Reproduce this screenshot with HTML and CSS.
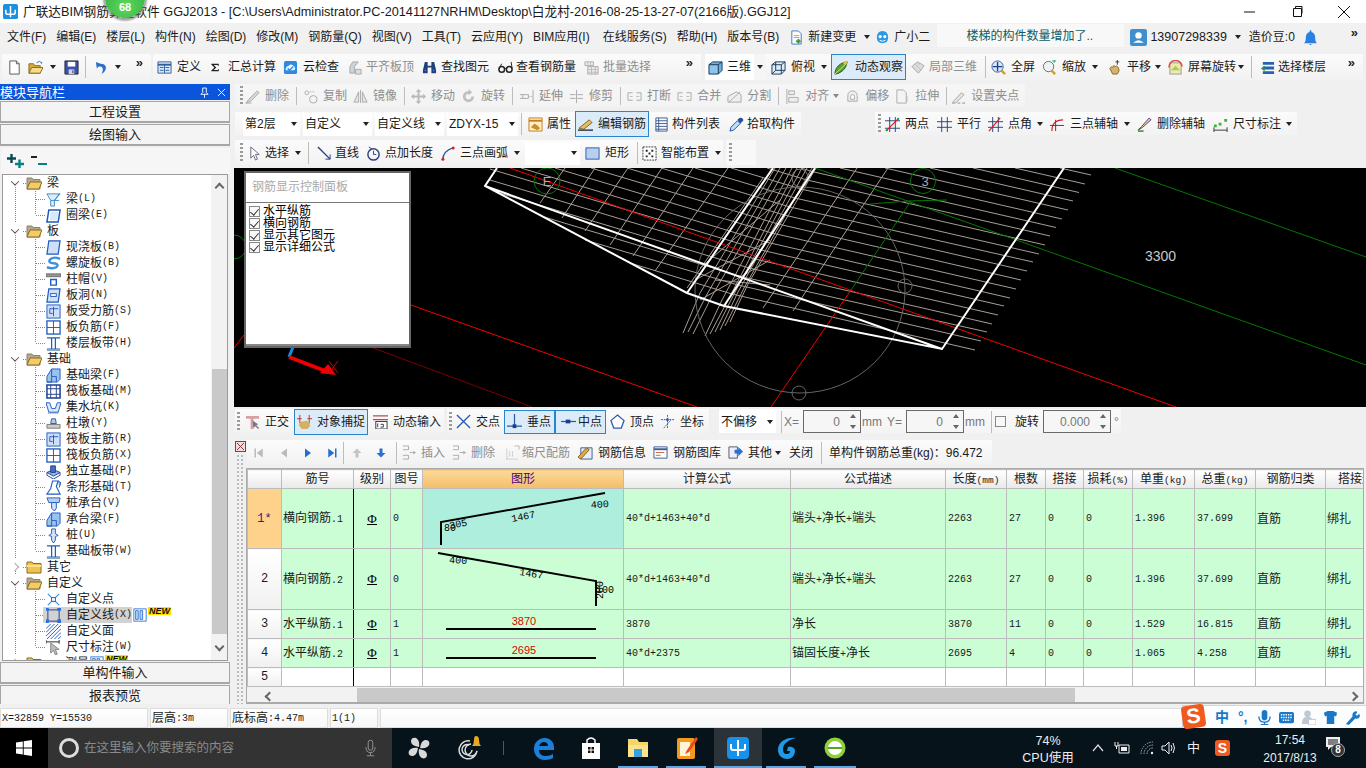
FILE: index.html
```html
<!DOCTYPE html>
<html lang="zh-CN">
<head>
<meta charset="utf-8">
<title>广联达BIM钢筋算量软件 GGJ2013</title>
<link rel="stylesheet" href="styles.css">
</head>
<body>
<svg class="sprite" xmlns="http://www.w3.org/2000/svg">
<defs>
<symbol id="new" viewBox="0 0 16 16"><path d="M3 1h7l3 3v11H3z" fill="#fff" stroke="#555"/><path d="M10 1v3h3" fill="#ddd" stroke="#555"/></symbol>
<symbol id="open" viewBox="0 0 16 16"><path d="M1 4h5l1 2h6v8H1z" fill="#d9ab3e" stroke="#8a6a20"/><path d="M4 8h12l-3 6H1z" fill="#f6dc84" stroke="#8a6a20"/><path d="M9 3q3-3 6 0l-1 1" fill="none" stroke="#3a6ec0"/></symbol>
<symbol id="save" viewBox="0 0 16 16"><path d="M1 1h14v14H1z" fill="#3a55a8" stroke="#223"/><path d="M4 2h8v5H4z" fill="#fff"/><path d="M5 10h6v5H5z" fill="#cfd6e6"/><path d="M9 11h1v3H9z" fill="#334"/></symbol>
<symbol id="undo" viewBox="0 0 16 16"><path d="M2 2l1 7 2-2c4-1 6 2 3 8 6-3 7-11-1-11z" fill="#2a6fc9"/></symbol>
<symbol id="define" viewBox="0 0 16 16"><path d="M1 2h14v12H1z" fill="#dbe8f6" stroke="#2e5f9e"/><path d="M1 5h14" stroke="#2e5f9e" stroke-width="2"/><path d="M3 8h4M3 11h4M9 8h4M9 11h4M8 5v9" stroke="#2e5f9e"/></symbol>
<symbol id="cloud" viewBox="0 0 16 16"><rect x="1" y="1" width="14" height="14" rx="2" fill="#2f8ade"/><path d="M3 11q-1-4 3-5 3-3 6 1 2 2 0 4z" fill="#e9f4fd"/><path d="M5 9l2 2 4-4" fill="none" stroke="#2f8ade" stroke-width="1.5"/></symbol>
<symbol id="level" viewBox="0 0 16 16"><path d="M2 14V7l3-5h6L7 7v7z" fill="#cfd2d2" stroke="#aaa"/><path d="M8 10h6v5H8z" fill="#ddd" stroke="#aaa"/></symbol>
<symbol id="binoc" viewBox="0 0 16 16"><path d="M3 2h3v4h4V2h3l2 9v3h-5V8H6v6H1v-3z" fill="#1f3f7f"/><path d="M3 11h1M12 11h1" stroke="#9bd" /></symbol>
<symbol id="glass" viewBox="0 0 16 16"><circle cx="4" cy="10" r="3" fill="none" stroke="#222" stroke-width="1.6"/><circle cx="12" cy="10" r="3" fill="none" stroke="#222" stroke-width="1.6"/><path d="M7 9h2M1 9l3-5M15 9l-1-7" stroke="#222" fill="none"/></symbol>
<symbol id="batch" viewBox="0 0 16 16"><path d="M1 2h9v4H1zM4 7h11v8H4z" fill="#eee" stroke="#aaa"/><path d="M4 10h11M4 13h11M8 7v8M12 7v8M4 2v4M7 2v4" stroke="#bbb"/></symbol>
<symbol id="cube" viewBox="0 0 16 16"><path d="M1 5l4-3h10v9l-4 4H1z" fill="#6db0e0" stroke="#1e3a55"/><path d="M1 5h10v10M11 5l4-3" stroke="#1e3a55" fill="none"/><path d="M2 6h8v8H2z" fill="#8cc6ee"/></symbol>
<symbol id="cubet" viewBox="0 0 16 16"><path d="M1 5l4-3h10v9l-4 4H1z" fill="#dcecf8" stroke="#1e3a55"/><path d="M1 5h10v10M11 5l4-3M5 2v9h10M5 11l-4 4" stroke="#1e3a55" fill="none"/></symbol>
<symbol id="orbit" viewBox="0 0 16 16"><path d="M1 15c0-7 5-12 13-13-1 7-5 11-12 13z" fill="#58a030" stroke="#2d5a15"/><path d="M1 15L13 4" stroke="#d8e8b0"/><circle cx="12" cy="3" r="2" fill="#e8c33a"/></symbol>
<symbol id="local3" viewBox="0 0 16 16"><path d="M2 7l6-5 7 4-6 8z" fill="#ddd" stroke="#aaa"/><path d="M2 7l7 7M8 2l2 3M5 4l7 7" stroke="#bbb"/></symbol>
<symbol id="full" viewBox="0 0 16 16"><circle cx="7" cy="7" r="6" fill="#d8e6f8" stroke="#3a5fa8"/><path d="M7 2v10M2 7h10" stroke="#1e3f88" stroke-width="1.4"/><path d="M11 11l4 4" stroke="#c9a030" stroke-width="2.5"/></symbol>
<symbol id="zoom" viewBox="0 0 16 16"><circle cx="7" cy="7" r="5.5" fill="#eef3f8" stroke="#666"/><path d="M10 11l4 4" stroke="#c9a030" stroke-width="2.5"/><path d="M11 1h4M13 0v3" stroke="#2a6" /></symbol>
<symbol id="pan" viewBox="0 0 16 16"><path d="M3 9l2-2 1 1 1-2 2 1 1-1 2 2 1 3-2 4H6z" fill="#d8b070" stroke="#8a6a20"/><path d="M11 0v5M9 2h4" stroke="#335" /></symbol>
<symbol id="rot" viewBox="0 0 16 16"><rect x="2" y="3" width="12" height="12" fill="#f2e8a8" stroke="#999"/><path d="M3 11l5-5 5 5" fill="#9ccf6a"/><path d="M1 8a7 7 0 0 1 14-1" fill="none" stroke="#e05040" stroke-width="1.6"/></symbol>
<symbol id="floor" viewBox="0 0 16 16"><path d="M3 2h12v3H3zM3 7h12v3H3zM3 12h12v3H3z" fill="#2a60b0"/><path d="M1 9l4-3v6z" fill="#1a9a40"/></symbol>
<symbol id="nfile" viewBox="0 0 16 16"><path d="M3 1h7l3 3v11H3z" fill="#fff" stroke="#3a78c8"/><path d="M5 6h6M5 8h6" stroke="#8ab"/><path d="M10 9l3 3-3 3-3-3z" fill="#4aa040"/></symbol>
<symbol id="gxe" viewBox="0 0 16 16"><path d="M2 8q0-7 6-7t6 7q0 6-6 6t-6-6z" fill="#2a9ae6"/><circle cx="5.5" cy="7" r="1.7" fill="#fff"/><circle cx="10.5" cy="7" r="1.7" fill="#fff"/><path d="M5 11q3 2 6 0" stroke="#fff" fill="none"/></symbol>
<symbol id="user" viewBox="0 0 16 16"><rect width="16" height="16" rx="2" fill="#3f8fd0"/><circle cx="8" cy="6" r="3" fill="#fff"/><path d="M3 13q5-5 10 0z" fill="#fff"/></symbol>
<symbol id="bell" viewBox="0 0 16 16"><path d="M8 0q1 0 1 2 4 1 4 6t2 6H1q2-1 2-6t4-6q0-2 1-2z" fill="#2a7fe0"/><path d="M6 15h4l-2 1z" fill="#2a7fe0"/></symbol>
<symbol id="del" viewBox="0 0 16 16"><path d="M1 15l3-4 9-9 2 2-9 9z" fill="#d8d8d8" stroke="#aaa"/><path d="M1 15h6" stroke="#aaa"/></symbol>
<symbol id="copy" viewBox="0 0 16 16"><circle cx="4" cy="4" r="2" fill="none" stroke="#aaa"/><circle cx="11" cy="11" r="4" fill="none" stroke="#aaa"/><path d="M7 3l6 0" stroke="#bbb" stroke-dasharray="2 1"/></symbol>
<symbol id="mirror" viewBox="0 0 16 16"><path d="M1 14L6 3v11zM15 14L10 3v11z" fill="#e6e6e6" stroke="#aaa"/><path d="M8 1v14" stroke="#aaa"/></symbol>
<symbol id="move" viewBox="0 0 16 16"><path d="M8 0l3 3H9v4h4V5l3 3-3 3V9H9v4h2l-3 3-3-3h2V9H3v2L0 8l3-3v2h4V3H5z" fill="#b8b8b8"/></symbol>
<symbol id="rota" viewBox="0 0 16 16"><path d="M8 2a6 6 0 1 0 6 6h-3a3 3 0 1 1-3-3v2l4-3.500-4-3.500z" fill="#c0c0c0"/></symbol>
<symbol id="ext" viewBox="0 0 16 16"><path d="M15 1v14M1 6h9v4H1M4 6v4" fill="none" stroke="#aaa"/><path d="M11 8h3" stroke="#aaa" stroke-dasharray="1 1"/></symbol>
<symbol id="trim" viewBox="0 0 16 16"><path d="M8 1v14M1 6h6M1 10h6M9 6h6M9 10h6" fill="none" stroke="#aaa"/></symbol>
<symbol id="brk" viewBox="0 0 16 16"><path d="M1 4h5M10 4h5M1 12h5M10 12h5M1 4v8M15 4v8" stroke="#aaa" fill="none"/><path d="M3 8h3M10 8h3" stroke="#bbb"/></symbol>
<symbol id="split" viewBox="0 0 16 16"><path d="M1 14V8l9-5 5 3v8z" fill="#eee" stroke="#aaa"/><path d="M2 14L14 3" stroke="#aaa"/></symbol>
<symbol id="align" viewBox="0 0 16 16"><path d="M2 0v16" stroke="#aaa"/><path d="M4 2h6v4H4zM4 9h10v5H4z" fill="#eee" stroke="#aaa"/></symbol>
<symbol id="offs" viewBox="0 0 16 16"><path d="M3 13V7a5 5 0 0 1 10 0v6z" fill="#eee" stroke="#aaa"/><path d="M6 11V8a2 2 0 0 1 4 0v3z" fill="#fff" stroke="#aaa"/></symbol>
<symbol id="stretch" viewBox="0 0 16 16"><path d="M2 1h7l3 3v11H2z" fill="#f4f4f4" stroke="#aaa"/><path d="M13 8v6" stroke="#aaa" stroke-dasharray="1 1"/></symbol>
<symbol id="grip3" viewBox="0 0 16 16"><path d="M2 14l9-10 3 2-9 9z" fill="#e4e4e4" stroke="#aaa"/><path d="M1 14h3v2H1zM7 14h3v2H7zM12 14h3v2h-3z" fill="#bbb"/></symbol>
<symbol id="prop" viewBox="0 0 16 16"><path d="M1 1h14v14H1z" fill="#fbf0c8" stroke="#c87a20"/><path d="M1 4h14" stroke="#c87a20" stroke-width="2"/><path d="M3 11l4-4 3 2 3 3-3 2z" fill="#c89020"/></symbol>
<symbol id="edit" viewBox="0 0 16 16"><path d="M1 12L12 3l3 3-9 7z" fill="#e6c060" stroke="#806020"/><path d="M0 14h16" stroke="#223" stroke-width="1.4"/></symbol>
<symbol id="list" viewBox="0 0 16 16"><path d="M2 1h12v14H2z" fill="#fff" stroke="#3a5a90"/><path d="M5 1v14M2 4h12M2 7h12M2 10h12M2 13h12" stroke="#3a5a90"/></symbol>
<symbol id="pick" viewBox="0 0 16 16"><path d="M1 15l1-4 7-7 3 3-7 7z" fill="#bfe0f4" stroke="#2050a0"/><path d="M9 3l2-2q2-1 4 1 1 2-1 3l-2 2z" fill="#2a50a0"/></symbol>
<symbol id="two" viewBox="0 0 16 16"><path d="M5 0v16M11 0v16M0 4h16M0 12h16" stroke="#2a3f80"/><path d="M1 15L14 2" stroke="#d82020" stroke-width="1.3"/><circle cx="14" cy="2" r="1.2" fill="#19a050"/><circle cx="2" cy="14" r="1.2" fill="#19a050"/></symbol>
<symbol id="para" viewBox="0 0 16 16"><path d="M5 0v16M11 0v16M0 5h16M0 11h16" stroke="#2a3f80"/></symbol>
<symbol id="angle" viewBox="0 0 16 16"><path d="M5 0v16M11 0v16M0 5h16M0 11h16" stroke="#2a3f80"/><path d="M1 15L13 1" stroke="#d82020" stroke-width="1.3"/></symbol>
<symbol id="arc3" viewBox="0 0 16 16"><path d="M2 15q0-12 12-12" fill="none" stroke="#d82020" stroke-width="1.3"/><path d="M6 3v12M0 9h15" stroke="#2a3f80"/></symbol>
<symbol id="delaxis" viewBox="0 0 16 16"><path d="M1 14l4-4 8-9 2 2-9 8z" fill="#e8c8a0" stroke="#504080"/><path d="M1 15h6" stroke="#5a3" stroke-width="2"/></symbol>
<symbol id="dim" viewBox="0 0 16 16"><path d="M1 11v5M15 11v5M1 14h14" stroke="#333"/><path d="M12 2h3v3h-3zM6 6h3v3H6zM1 8h3v3H1z" fill="#40b040"/></symbol>
<symbol id="select" viewBox="0 0 16 16"><path d="M3 1v12l3-3 2 5 2-1-2-5h4z" fill="#fff" stroke="#667"/></symbol>
<symbol id="line" viewBox="0 0 16 16"><path d="M1 1l13 13" stroke="#2a3f80" stroke-width="1.5"/><path d="M14 14V9M14 14H9" stroke="#2a3f80"/></symbol>
<symbol id="ptlen" viewBox="0 0 16 16"><circle cx="8" cy="9" r="6" fill="none" stroke="#2a3f80" stroke-width="1.5"/><path d="M8 5v4h3M3 1l3 2-3 2" fill="none" stroke="#2a3f80"/></symbol>
<symbol id="arcp" viewBox="0 0 16 16"><path d="M2 15q0-10 11-13" fill="none" stroke="#2a5ab0" stroke-width="1.6"/><circle cx="13" cy="2" r="1.6" fill="#d82020"/><circle cx="2" cy="14" r="1.6" fill="#d82020"/></symbol>
<symbol id="rect" viewBox="0 0 16 16"><rect x="1" y="2" width="14" height="12" fill="#b8d0ee" stroke="#2a5ab0"/></symbol>
<symbol id="smart" viewBox="0 0 16 16"><path d="M1 1h14v14H1z" fill="#fff" stroke="#333" stroke-dasharray="2 1"/><path d="M4 4h2v2H4zM10 4h2v2h-2zM7 7h2v2H7zM4 10h2v2H4zM10 10h2v2h-2z" fill="#222"/></symbol>
<symbol id="ortho" viewBox="0 0 16 16"><path d="M1 2h14v3H9v11H6V5H1z" fill="#d8a0a0"/><path d="M8 7l1 8 2-2 3 3 1-1-3-3 2-1z" fill="#778"/></symbol>
<symbol id="snap" viewBox="0 0 16 16"><path d="M3 1v9M13 1v9M0 5h5M11 5h5" stroke="#c03020"/><path d="M2 12q1-5 5-4l3-1 3 2 1 4-3 3H5z" fill="#d4b060"/></symbol>
<symbol id="dyn" viewBox="0 0 16 16"><path d="M0 2h16M0 6h16" stroke="#b05050" stroke-width="1.4"/><rect x="3" y="8" width="12" height="8" fill="#fff" stroke="#334"/><path d="M5 10v4M8 11h3v3H8" stroke="#334" fill="none"/></symbol>
<symbol id="cross" viewBox="0 0 16 16"><path d="M1 1l14 14M15 1L1 15" stroke="#2a5ab0" stroke-width="1.4"/></symbol>
<symbol id="perp" viewBox="0 0 16 16"><path d="M8 0v15M0 13h16" stroke="#2a5ab0" stroke-width="1.3"/><rect x="6" y="11" width="4" height="4" fill="#1a3f90"/></symbol>
<symbol id="mid" viewBox="0 0 16 16"><path d="M0 8h16" stroke="#2a5ab0" stroke-width="1.3"/><rect x="5" y="6" width="5" height="4" fill="#1a3f90"/></symbol>
<symbol id="vert" viewBox="0 0 16 16"><path d="M8 1l7 6-3 8H4L1 7z" fill="#fff" stroke="#2a5ab0" stroke-width="1.3"/></symbol>
<symbol id="coord" viewBox="0 0 16 16"><path d="M1 6h14M8 1v14M4 15l8-9" stroke="#2a5ab0" stroke-dasharray="2 1" fill="none"/><circle cx="8" cy="6" r="1.5" fill="#2a5ab0"/></symbol>
<symbol id="first" viewBox="0 0 16 16"><path d="M2 2h2v12H2zM13 2v12L5 8z" fill="#bbb"/></symbol>
<symbol id="prev" viewBox="0 0 16 16"><path d="M12 2v12L4 8z" fill="#bbb"/></symbol>
<symbol id="next" viewBox="0 0 16 16"><path d="M4 2v12l8-6z" fill="#2070d0"/></symbol>
<symbol id="last" viewBox="0 0 16 16"><path d="M3 2v12l8-6zM12 2h2v12h-2z" fill="#2070d0"/></symbol>
<symbol id="up" viewBox="0 0 16 16"><path d="M8 2l6 6h-4v6H6V8H2z" fill="#c4c4c4"/></symbol>
<symbol id="down" viewBox="0 0 16 16"><path d="M8 14l6-6h-4V2H6v6H2z" fill="#2a70d0"/></symbol>
<symbol id="ins" viewBox="0 0 16 16"><path d="M1 1h6v4H1M1 11h6v4H1" fill="none" stroke="#aaa"/><path d="M8 8h4" stroke="#aaa"/><path d="M12 6l3 2-3 2z" fill="#aaa"/></symbol>
<symbol id="scale" viewBox="0 0 16 16"><path d="M2 15V3M2 15h12M5 12V6M8 12V6" stroke="#aaa" stroke-dasharray="1 1"/><path d="M10 1h5v4" stroke="#bbb" fill="none"/></symbol>
<symbol id="info" viewBox="0 0 16 16"><path d="M3 3h12v12H3z" fill="#e8eef8" stroke="#3a5a90"/><path d="M0 13L9 3l3 2-9 10z" fill="#e8a840" stroke="#806020"/></symbol>
<symbol id="lib" viewBox="0 0 16 16"><path d="M1 2h14v12H1z" fill="#fff" stroke="#3a5a90"/><path d="M1 4.500h14" stroke="#3a5a90" stroke-width="2"/><path d="M3 8h9M3 11h5" stroke="#c86040"/></symbol>
<symbol id="other" viewBox="0 0 16 16"><path d="M1 2h9v12H1z" fill="#eef" stroke="#556"/><path d="M7 5h4V2l5 5-5 5V9H7z" fill="#2a70d0"/></symbol>
<symbol id="sum" viewBox="0 0 16 16"><path d="M2 2h12v4l-2-2H6l4 4-4 4h6l2-2v4H2v-1l5-5-5-5z" fill="#222"/></symbol>
<symbol id="folderO" viewBox="0 0 16 14"><path d="M1 2h5l1 1.500h7V13H1z" fill="#b4a78a" stroke="#8d836b"/><path d="M1 13l3-7h12l-3 7z" fill="#f2cc68" stroke="#8d6a22"/></symbol>
<symbol id="folderC" viewBox="0 0 16 14"><path d="M1 2h5l1 1.500h8V13H1z" fill="#f0c24e" stroke="#8d6a22"/><path d="M1 5h14v2H1z" fill="#f8e190"/></symbol>
<symbol id="beam" viewBox="0 0 16 16"><path d="M1 2h14L9 9v6H5V9z" fill="#d8eefc" stroke="#3f8ac8"/><path d="M5 9h9M9 9l5-7" stroke="#3f8ac8"/></symbol>
<symbol id="ring" viewBox="0 0 16 16"><path d="M3 2h12l-2 13H1z" fill="#fff" stroke="#1f5ac0" stroke-width="1.6"/><path d="M5 4h8l-1 9H4z" fill="#d8e8f8"/></symbol>
<symbol id="slab" viewBox="0 0 16 16"><path d="M3 1h12l-2 14H1z" fill="#cfe0f6" stroke="#1f5ac0" stroke-width="1.3"/></symbol>
<symbol id="spiral" viewBox="0 0 16 16"><path d="M15 3Q7 0 4 4q-2 4 6 4 4 1 1 4-4 2-10 0" fill="none" stroke="#3c90dc" stroke-width="2.600"/></symbol>
<symbol id="cap" viewBox="0 0 16 16"><path d="M0 2h16v3H0z" fill="#999" stroke="#666"/><path d="M5 8h6v6H5z" fill="#fff" stroke="#2060c0" stroke-width="1.5"/></symbol>
<symbol id="hole" viewBox="0 0 16 16"><path d="M3 1h12l-2 14H1z" fill="#cfe0f6" stroke="#1f5ac0" stroke-width="1.3"/><rect x="5" y="6" width="6" height="3" fill="#fff" stroke="#1f5ac0"/></symbol>
<symbol id="rebarA" viewBox="0 0 16 16"><rect x="1" y="1" width="14" height="14" fill="#cfe0f6" stroke="#1f5ac0"/><path d="M8 3v10M4 5h9M4 5v5h3" stroke="#1f5ac0" fill="none"/></symbol>
<symbol id="rebarB" viewBox="0 0 16 16"><rect x="1" y="1" width="14" height="14" fill="#fff" stroke="#1f5ac0" stroke-width="1.4"/><path d="M8 1v14M1 8h14" stroke="#1f5ac0"/></symbol>
<symbol id="band" viewBox="0 0 16 16"><path d="M1 2h14M1 14h14M6 2v12M10 2v12" stroke="#1f5ac0" stroke-width="1.3"/><path d="M1 15h14" stroke="#8ab" stroke-width="2"/></symbol>
<symbol id="found" viewBox="0 0 16 16"><path d="M6 1h9v11l-3 3H1V9z" fill="#9bc4ec" stroke="#1f5ac0"/><path d="M6 1v8M1 15h5V9h5v6" stroke="#1f5ac0" fill="none"/></symbol>
<symbol id="raft" viewBox="0 0 16 16"><path d="M1 1h14v14H1z" fill="#fff" stroke="#1f3f90" stroke-width="1.6"/><path d="M5 5h6v6H5zM1 5h4M11 5h4M1 11h4M11 11h4M5 1v4M11 1v4M5 11v4M11 11v4" fill="#fff" stroke="#1f3f90"/></symbol>
<symbol id="sump" viewBox="0 0 16 16"><path d="M0 3h4l2 6h4l2-6h4l-3 10H3z" fill="#d8e8fa" stroke="#1f5ac0"/><path d="M2 14h12" stroke="#1f5ac0" stroke-dasharray="1 1"/></symbol>
<symbol id="pier" viewBox="0 0 16 16"><path d="M6 3h4l1 5H5z" fill="#bcd" stroke="#1f5ac0"/><path d="M1 9h14v4H1z" fill="#ccc" stroke="#777"/></symbol>
<symbol id="iso" viewBox="0 0 16 16"><path d="M1 9l7-3 7 3-7 4z" fill="#8fb8e8" stroke="#1f3f90"/><path d="M5 2h5v7H5z" fill="#4a70b8" stroke="#1f3f90"/><path d="M1 9v3l7 4 7-4V9" fill="none" stroke="#1f3f90"/></symbol>
<symbol id="strip" viewBox="0 0 16 16"><path d="M7 1h6l-2 6 4 8H1l4-6z" fill="#fff" stroke="#1f5ac0" stroke-width="1.2"/><path d="M13 1l3 2-2 5" fill="#7ba8dc" stroke="#1f5ac0"/></symbol>
<symbol id="pilecap" viewBox="0 0 16 16"><path d="M1 2h14l-1 5H3z" fill="#b8d0ee" stroke="#1f5ac0"/><path d="M6 7h5v6l-2 3-3-3z" fill="#d8e4f4" stroke="#1f5ac0"/></symbol>
<symbol id="pile" viewBox="0 0 16 16"><path d="M6 1h4v5l3 2-3 1v4l-2 3-2-3V9L3 8l3-2z" fill="#d8e4f4" stroke="#1f5ac0"/></symbol>
<symbol id="xpt" viewBox="0 0 16 16"><path d="M2 2l12 12M14 2L2 14" stroke="#3c90dc" stroke-width="1.3"/><rect x="6" y="6" width="4" height="4" fill="#fff" stroke="#1f5ac0"/></symbol>
<symbol id="xln" viewBox="0 0 16 16"><rect x="2" y="2" width="12" height="12" fill="none" stroke="#1f3f90"/><path d="M0 0h3v3H0zM12 0h4v3h-4zM0 12h3v4H0zM12 12h4v4h-4z" fill="#2a70e0"/></symbol>
<symbol id="xfc" viewBox="0 0 16 16"><path d="M0 5l5-5M0 9l9-9M0 13l13-13M1 16L16 1M5 16L16 5M9 16l7-7M13 16l3-3" stroke="#1f5ac0"/></symbol>
<symbol id="dimc" viewBox="0 0 16 16"><path d="M0 2h14M0 0v4M14 0v4" stroke="#222"/><path d="M5 3v11l3-3 2 5 2-1-2-5h4z" fill="#bbb" stroke="#888"/></symbol>
<symbol id="gridn" viewBox="0 0 16 16"><rect x="1" y="1" width="14" height="14" fill="#fff" stroke="#2a70d0"/><path d="M3 3h3v10H3zM8 3h3v10H8z" fill="#bcd8f6" stroke="#2a70d0"/></symbol>
<symbol id="plusP" viewBox="0 0 18 14"><path d="M0 4.500h9M4.500 0v9" stroke="#0a4a50" stroke-width="2.400"/><path d="M8 10h9M12.500 5.500v8.500" stroke="#0a8084" stroke-width="2.400"/></symbol>
<symbol id="minusP" viewBox="0 0 18 14"><path d="M1 3h6" stroke="#222" stroke-width="2"/><path d="M8 10h9" stroke="#0a8084" stroke-width="2"/></symbol>
</defs>
</svg>

<div class="app">
  <header class="title">
    <svg class="appicon" viewBox="0 0 16 16"><rect width="16" height="16" rx="2" fill="#1b8fe0"/><path d="M8 2v12M3 6v3q0 2 2 2h6q2 0 2-2V6" fill="none" stroke="#fff" stroke-width="1.6"/></svg>
    <span class="title-text">广联达BIM钢筋算量软件 GGJ2013 - [C:\Users\Administrator.PC-20141127NRHM\Desktop\白龙村-2016-08-25-13-27-07(2166版).GGJ12]</span>
    <span class="win-btns">
      <svg class="wb" viewBox="0 0 12 12"><path d="M0 6h11" stroke="#111"/></svg>
      <svg class="wb" viewBox="0 0 12 12"><path d="M2.500 2.500h8v8h-8zM4.500 2.500v-2h6.500v7h-1" fill="none" stroke="#111"/></svg>
      <svg class="wb" viewBox="0 0 12 12"><path d="M0 0l12 12M12 0L0 12" stroke="#111"/></svg>
    </span>
    <span class="badge">68</span>
  </header>

  <nav class="menu">
    <span class="mi">文件(F)</span><span class="mi">编辑(E)</span><span class="mi">楼层(L)</span><span class="mi">构件(N)</span><span class="mi">绘图(D)</span><span class="mi">修改(M)</span><span class="mi">钢筋量(Q)</span><span class="mi">视图(V)</span><span class="mi">工具(T)</span><span class="mi">云应用(Y)</span><span class="mi mr13">BIM应用(I)</span><span class="mi">在线服务(S)</span><span class="mi">帮助(H)</span><span class="mi">版本号(B)</span>
    <span class="t ml0 g4"><svg class="i"><use href="#nfile"/></svg>新建变更</span><i class="car ml8"></i>
    <span class="t ml5 g4"><svg class="i"><use href="#gxe"/></svg>广小二</span>
    <span class="notice">楼梯的构件数量增加了..</span>
    <span class="t ml6 g3 phone"><svg class="i"><use href="#user"/></svg>13907298339</span><i class="car ml8"></i>
    <span class="ml8">造价豆:0</span>
    <svg class="i ml8"><use href="#bell"/></svg>
    <span class="more">»</span>
  </nav>

  <div class="tbrow row1">
    <div class="grp g-file">
      <svg class="i"><use href="#new"/></svg>
      <svg class="i ml6"><use href="#open"/></svg><i class="car ml7"></i>
      <svg class="i ml8"><use href="#save"/></svg>
      <i class="sep ml6"></i>
      <svg class="i ml8"><use href="#undo"/></svg><i class="car ml6"></i>
      <span class="more">»</span>
    </div>
    <div class="grp g-calc">
      <span class="t ml0"><svg class="i"><use href="#define"/></svg>定义</span>
      <span class="t ml9 g8"><svg class="i sm"><use href="#sum"/></svg>汇总计算</span>
      <span class="t ml7"><svg class="i"><use href="#cloud"/></svg>云检查</span>
      <span class="t off ml9 g3"><svg class="i"><use href="#level"/></svg>平齐板顶</span>
      <span class="t g4"><svg class="i"><use href="#binoc"/></svg>查找图元</span>
      <span class="t ml9 g3"><svg class="i"><use href="#glass"/></svg>查看钢筋量</span>
      <span class="t off g4"><svg class="i"><use href="#batch"/></svg>批量选择</span>
      <span class="more">»</span>
    </div>
    <div class="grp g-view">
      <span class="selbox"><svg class="i"><use href="#cube"/></svg><b class="lbl">三维</b><i class="car ml6"></i></span>
      <span class="t ml5"><svg class="i"><use href="#cubet"/></svg>俯视</span><i class="car ml6"></i>
      <span class="t hi ml4 g6"><svg class="i"><use href="#orbit"/></svg>动态观察</span>
      <span class="t off ml4 g4"><svg class="i"><use href="#local3"/></svg>局部三维</span>
      <i class="sep ml8"></i>
      <span class="t ml5"><svg class="i"><use href="#full"/></svg>全屏</span>
      <span class="t ml7"><svg class="i"><use href="#zoom"/></svg>缩放</span><i class="car ml6"></i>
      <span class="t ml9"><svg class="i"><use href="#pan"/></svg>平移</span><i class="car ml4"></i>
      <span class="t ml7"><svg class="i"><use href="#rot"/></svg>屏幕旋转</span><i class="car ml2"></i>
      <i class="sep ml7"></i>
      <span class="t g3"><svg class="i"><use href="#floor"/></svg>选择楼层</span>
      <span class="more">»</span>
    </div>
  </div>

  <div class="work">
    <aside class="nav">
      <div class="nav-head"><span>模块导航栏</span><span class="nav-ctl"><svg class="pin" viewBox="0 0 10 12"><path d="M3 1h4v5l2 2H1l2-2zM5 8v4" fill="none" stroke="#fff"/></svg><svg class="pin" viewBox="0 0 10 12"><path d="M1 2l8 8M9 2l-8 8" stroke="#fff"/></svg></span></div>
      <div class="nav-btn h1">工程设置</div>
      <div class="nav-btn h2">绘图输入</div>
      <div class="nav-tools"><svg class="pm"><use href="#plusP"/></svg><svg class="pm"><use href="#minusP"/></svg></div>
      <div class="tree">
        <div class="rows">
          <div class="pr"><i class="arr open"></i><svg class="fold"><use href="#folderO"/></svg>梁</div>
          <div class="cr"><svg class="i"><use href="#beam"/></svg>梁<b>(L)</b></div>
          <div class="cr end"><svg class="i"><use href="#ring"/></svg>圈梁<b>(E)</b></div>
          <div class="pr"><i class="arr open"></i><svg class="fold"><use href="#folderO"/></svg>板</div>
          <div class="cr"><svg class="i"><use href="#slab"/></svg>现浇板<b>(B)</b></div>
          <div class="cr"><svg class="i"><use href="#spiral"/></svg>螺旋板<b>(B)</b></div>
          <div class="cr"><svg class="i"><use href="#cap"/></svg>柱帽<b>(V)</b></div>
          <div class="cr"><svg class="i"><use href="#hole"/></svg>板洞<b>(N)</b></div>
          <div class="cr"><svg class="i"><use href="#rebarA"/></svg>板受力筋<b>(S)</b></div>
          <div class="cr"><svg class="i"><use href="#rebarB"/></svg>板负筋<b>(F)</b></div>
          <div class="cr end"><svg class="i"><use href="#band"/></svg>楼层板带<b>(H)</b></div>
          <div class="pr"><i class="arr open"></i><svg class="fold"><use href="#folderO"/></svg>基础</div>
          <div class="cr"><svg class="i"><use href="#found"/></svg>基础梁<b>(F)</b></div>
          <div class="cr"><svg class="i"><use href="#raft"/></svg>筏板基础<b>(M)</b></div>
          <div class="cr"><svg class="i"><use href="#sump"/></svg>集水坑<b>(K)</b></div>
          <div class="cr"><svg class="i"><use href="#pier"/></svg>柱墩<b>(Y)</b></div>
          <div class="cr"><svg class="i"><use href="#rebarA"/></svg>筏板主筋<b>(R)</b></div>
          <div class="cr"><svg class="i"><use href="#rebarB"/></svg>筏板负筋<b>(X)</b></div>
          <div class="cr"><svg class="i"><use href="#iso"/></svg>独立基础<b>(P)</b></div>
          <div class="cr"><svg class="i"><use href="#strip"/></svg>条形基础<b>(T)</b></div>
          <div class="cr"><svg class="i"><use href="#pilecap"/></svg>桩承台<b>(V)</b></div>
          <div class="cr"><svg class="i"><use href="#found"/></svg>承台梁<b>(F)</b></div>
          <div class="cr"><svg class="i"><use href="#pile"/></svg>桩<b>(U)</b></div>
          <div class="cr end"><svg class="i"><use href="#band"/></svg>基础板带<b>(W)</b></div>
          <div class="pr"><i class="arr shut"></i><svg class="fold"><use href="#folderC"/></svg>其它</div>
          <div class="pr"><i class="arr open"></i><svg class="fold"><use href="#folderO"/></svg>自定义</div>
          <div class="cr"><svg class="i"><use href="#xpt"/></svg>自定义点</div>
          <div class="cr"><span class="cur"><svg class="i"><use href="#xln"/></svg>自定义线<b>(X)</b></span><svg class="i tag"><use href="#gridn"/></svg><em class="newtag">NEW</em></div>
          <div class="cr"><svg class="i"><use href="#xfc"/></svg>自定义面</div>
          <div class="cr end"><svg class="i"><use href="#dimc"/></svg>尺寸标注<b>(W)</b></div>
          <div class="pr"><i class="arr shut"></i><svg class="fold"><use href="#folderC"/></svg><span class="far">测量</span><svg class="i tag"><use href="#gridn"/></svg><em class="newtag">NEW</em></div>
        </div>
        <div class="vscroll"><i class="chev up"></i><div class="vtrack"><div class="vthumb"></div></div><i class="chev dn"></i></div>
      </div>
      <div class="nav-btn h3">单构件输入</div>
      <div class="nav-btn h4">报表预览</div>
    </aside>

    <main class="right">
      <div class="tbrow row2">
        <div class="grp g-edit">
          <i class="grip"></i>
          <span class="t off ml2"><svg class="i"><use href="#del"/></svg>删除</span><i class="sep"></i>
          <span class="t off"><svg class="i"><use href="#copy"/></svg>复制</span>
          <span class="t off"><svg class="i"><use href="#mirror"/></svg>镜像</span><i class="sep"></i>
          <span class="t off"><svg class="i"><use href="#move"/></svg>移动</span>
          <span class="t off"><svg class="i"><use href="#rota"/></svg>旋转</span><i class="sep"></i>
          <span class="t off"><svg class="i"><use href="#ext"/></svg>延伸</span>
          <span class="t off"><svg class="i"><use href="#trim"/></svg>修剪</span><i class="sep"></i>
          <span class="t off"><svg class="i"><use href="#brk"/></svg>打断</span>
          <span class="t off"><svg class="i"><use href="#brk"/></svg>合并</span>
          <span class="t off"><svg class="i"><use href="#split"/></svg>分割</span><i class="sep"></i>
          <span class="t off"><svg class="i"><use href="#align"/></svg>对齐</span><i class="car off ml4"></i>
          <span class="t off"><svg class="i"><use href="#offs"/></svg>偏移</span>
          <span class="t off"><svg class="i"><use href="#stretch"/></svg>拉伸</span><i class="sep"></i>
          <span class="t off ml4"><svg class="i"><use href="#grip3"/></svg>设置夹点</span>
        </div>
      </div>
      <div class="tbrow row3">
        <div class="grp g-sel">
          <span class="dd w57">第2层<i class="car"></i></span>
          <span class="dd w69">自定义<i class="car"></i></span>
          <span class="dd w69">自定义线<i class="car"></i></span>
          <span class="dd w71">ZDYX-15<i class="car"></i></span>
          <i class="sep ml0"></i>
          <span class="t ml6 g4"><svg class="i"><use href="#prop"/></svg>属性</span>
          <span class="t hi ml4"><svg class="i"><use href="#edit"/></svg>编辑钢筋</span>
          <span class="t ml5 g3"><svg class="i"><use href="#list"/></svg>构件列表</span>
          <span class="t ml9 g3"><svg class="i"><use href="#pick"/></svg>拾取构件</span>
        </div>
        <div class="grp g-axis">
          <i class="grip"></i>
          <span class="t ml4"><svg class="i"><use href="#two"/></svg>两点</span>
          <span class="t"><svg class="i"><use href="#para"/></svg>平行</span>
          <span class="t ml7"><svg class="i"><use href="#angle"/></svg>点角</span><i class="car ml5"></i>
          <span class="t ml7"><svg class="i"><use href="#arc3"/></svg>三点辅轴</span><i class="car ml6"></i>
          <span class="t ml7"><svg class="i"><use href="#delaxis"/></svg>删除辅轴</span>
          <span class="t"><svg class="i"><use href="#dim"/></svg>尺寸标注</span><i class="car ml5"></i>
        </div>
      </div>
      <div class="tbrow row4">
        <div class="grp g-draw">
          <i class="grip"></i>
          <span class="t ml5 g2"><svg class="i"><use href="#select"/></svg>选择</span><i class="car ml6"></i>
          <i class="sep ml7"></i>
          <span class="t g3"><svg class="i"><use href="#line"/></svg>直线</span>
          <span class="t ml7 g4"><svg class="i"><use href="#ptlen"/></svg>点加长度</span>
          <span class="t g4"><svg class="i"><use href="#arcp"/></svg>三点画弧</span><i class="car ml6"></i>
          <span class="dd w55 ml5"><i class="car push"></i></span>
          <span class="t ml2"><svg class="i"><use href="#rect"/></svg>矩形</span>
          <i class="sep ml8"></i>
          <span class="t ml4 g4"><svg class="i"><use href="#smart"/></svg>智能布置</span><i class="car ml6"></i>
        </div>
        <div class="g-empty"><i class="grip"></i></div>
      </div>

      <div class="canvas">
        <svg class="cad" viewBox="234 168 1132 239" fill="none">
          <g stroke="#a99d93" stroke-width="1">
            <path d="M1060 168L1091 175M1015 168L1085 184M973 168L1079 192.500M930 168L1073 201M885 168L1068 210M840 168L1062 219M801 168L812 171.500L1056 227.500M767 168L807 180L1050 236M731 168L801 189L1045 245M695 168L795 198L1039 254M661 168L790 207L1033 262M627 168L784 215L1027 271M591 168L778 224L1021 280M555 168L772 233L1016 289M521 168L766 242L1010 298M490 169L761 250L1004 306M490 180L755 259L998 315M496 192L749 268L992 324M541 216L743 277L987 332M585 240L738 285L981 341M630 263L732 294L975 350"/>
            <path d="M763 308L857 168M793 311L888 168M540 203L565 168M562 218L595 168M585 231L628 168M610 245L662 168M633 256L693 168M655 271L728 168M687 288L763 178"/>
            <path d="M683 333L700 293L775 168M688 332L706 296L780 168M693 334L712 296L786 168M705 336L722 300L792 168M710 334L728 300L797 168M715 332L733 296L802 168M720 330L738 292L807 168M725 326L744 288L812 168M730 322L748 284L816 168"/>
            <path d="M700 268L780 200M695 280L770 240M700 300L770 260M715 280L770 285"/>
          </g>
          <ellipse cx="800" cy="290" rx="105" ry="103" stroke="#666"/>
          <ellipse cx="905" cy="286" rx="7" ry="7" stroke="#666"/>
          <ellipse cx="799" cy="393" rx="7" ry="7" stroke="#666"/>
          <ellipse cx="800" cy="178" rx="8" ry="9" stroke="#887c72"/>
          <g stroke="#007800">
            <circle cx="547" cy="181" r="13"/>
            <circle cx="923" cy="181" r="12.500"/>
            <circle cx="234" cy="247" r="12"/>
            <path d="M851 290L911 201M815 168L1366 365M1115 168L1366 257M870 204Q907 200 947 200"/>
          </g>
          <g stroke="#f00000">
            <path d="M510 168L1176 407M411 305L697 407M851 290L771 407M244 335L234 348"/>
          </g>
          <path d="M368 346L532 407" stroke="#7a0000"/>
          <g stroke="#fff" stroke-width="2">
            <path d="M497 168L485 186L687 293L724 306L942 349L1064 168M485 186L942 349M687 293L773 168M724 306L815 168"/>
          </g>
          <path d="M293 347L289 357" stroke="#1a8ae0" stroke-width="3"/>
          <path d="M289 357L328 372" stroke="#f00000" stroke-width="3.500"/>
          <path d="M320 373L336 375L328 364z" fill="#f00000"/>
          <path d="M329 361L338 373M338 361L329 373" stroke="#d00000"/>
          <text class="cadt" x="547" y="186" text-anchor="middle">E</text>
          <text class="cadt" x="925" y="186" text-anchor="middle">3</text>
          <text class="cadv" x="1145" y="261">3300</text>
        </svg>
        <div class="ctl">
          <div class="ctl-h">钢筋显示控制面板</div>
          <div class="ctl-b">
            <label class="ck"><i class="box on"></i>水平纵筋</label>
            <label class="ck"><i class="box on"></i>横向钢筋</label>
            <label class="ck"><i class="box on"></i>显示其它图元</label>
            <label class="ck"><i class="box on"></i>显示详细公式</label>
          </div>
        </div>
      </div>

      <div class="tbrow row5">
        <div class="grp g-ortho">
          <i class="grip"></i>
          <span class="t"><svg class="i"><use href="#ortho"/></svg>正交</span>
          <span class="t hi"><svg class="i"><use href="#snap"/></svg>对象捕捉</span>
          <span class="t"><svg class="i"><use href="#dyn"/></svg>动态输入</span>
        </div>
        <div class="grp g-snap">
          <i class="grip"></i>
          <span class="t ml4"><svg class="i"><use href="#cross"/></svg>交点</span>
          <span class="t hi2 ml4"><svg class="i"><use href="#perp"/></svg>垂点</span>
          <span class="t hi2 p2 ml0"><svg class="i"><use href="#mid"/></svg>中点</span>
          <span class="t ml4"><svg class="i"><use href="#vert"/></svg>顶点</span>
          <span class="t ml6"><svg class="i"><use href="#coord"/></svg>坐标</span>
        </div>
        <div class="grp g-off">
          <span class="dd w57">不偏移<i class="car"></i></span>
          <i class="sep ml2"></i>
          <span class="lab ml2">X=</span>
          <span class="spin w58">0<i class="arrows"></i></span>
          <span class="lab ml1">mm</span>
          <span class="lab ml5">Y=</span>
          <span class="spin w58">0<i class="arrows"></i></span>
          <span class="lab ml1">mm</span>
          <i class="sep ml6"></i>
          <i class="box ml3"></i>
          <span class="ml9 rot">旋转</span>
          <span class="spin w68">0.000<i class="arrows"></i></span>
          <span class="lab ml3">°</span>
        </div>
      </div>

      <div class="rebar">
        <div class="gutter">
          <svg class="closex" viewBox="0 0 11 11"><rect x=".5" y=".5" width="10" height="10" fill="#e8e0e0" stroke="#555"/><path d="M2 2l7 7M9 2L2 9" stroke="#b03030"/></svg>
        </div>
        <div class="rebar-main">
          <div class="tbrow row6">
            <div class="grp g-rebar">
              <svg class="i s"><use href="#first"/></svg>
              <svg class="i s ml13"><use href="#prev"/></svg>
              <svg class="i s ml12"><use href="#next"/></svg>
              <svg class="i s ml12"><use href="#last"/></svg>
              <i class="sep ml5"></i>
              <svg class="i s ml7"><use href="#up"/></svg>
              <svg class="i s ml12"><use href="#down"/></svg>
              <i class="sep ml9"></i>
              <span class="t ml5 g4 off"><svg class="i"><use href="#ins"/></svg>插入</span>
              <span class="t ml7 g4 off"><svg class="i"><use href="#ins"/></svg>删除</span>
              <span class="t ml10 g2 off"><svg class="i"><use href="#scale"/></svg>缩尺配筋</span>
              <span class="t ml8"><svg class="i"><use href="#info"/></svg>钢筋信息</span>
              <span class="t ml7"><svg class="i"><use href="#lib"/></svg>钢筋图库</span>
              <span class="t ml7"><svg class="i"><use href="#other"/></svg>其他</span><i class="car ml3"></i>
              <span class="ml8">关闭</span>
              <i class="sep ml8"></i>
              <span class="ml7">单构件钢筋总重(kg)：96.472</span>
            </div>
          </div>
          <div class="gridwrap">
            <table class="grid">
              <colgroup><col class="c1"><col class="c2"><col class="c3"><col class="c4"><col class="c5"><col class="c6"><col class="c7"><col class="c8"><col class="c9"><col class="c10"><col class="c11"><col class="c12"><col class="c13"><col class="c14"><col class="c15"></colgroup>
              <thead>
                <tr><th></th><th>筋号</th><th>级别</th><th>图号</th><th class="act">图形</th><th>计算公式</th><th>公式描述</th><th>长度<b>(mm)</b></th><th>根数</th><th>搭接</th><th>损耗<b>(%)</b></th><th>单重<b>(kg)</b></th><th>总重<b>(kg)</b></th><th>钢筋归类</th><th class="clipc">搭接形式</th></tr>
              </thead>
              <tbody>
                <tr class="r60 g"><th class="rowh cur1">1<b>*</b></th><td>横向钢筋<b>.1</b></td><td class="lvl"><span class="gr">Φ</span></td><td class="n">0</td>
                  <td class="shape sel1"><svg class="sh" viewBox="0 0 201 59"><path d="M18 56V33L182 4" stroke="#000" stroke-width="2" fill="none"/><text x="168" y="19" class="sh-t" transform="rotate(-3 168 19)">400</text><text x="89" y="33" class="sh-t" transform="rotate(-11 89 33)">1467</text><text x="21" y="42" class="sh-t">80</text><text x="27" y="40" class="sh-t" transform="rotate(-11 27 40)">305</text></svg></td>
                  <td class="n">40*d+1463+40*d</td><td>端头<b>+</b>净长<b>+</b>端头</td><td class="n">2263</td><td class="n">27</td><td class="n">0</td><td class="n">0</td><td class="n">1.396</td><td class="n">37.699</td><td>直筋</td><td>绑扎</td></tr>
                <tr class="r61 g"><th class="rowh">2</th><td>横向钢筋<b>.2</b></td><td class="lvl"><span class="gr">Φ</span></td><td class="n">0</td>
                  <td class="shape"><svg class="sh" viewBox="0 0 201 60"><path d="M15 4L173 32V57" stroke="#000" stroke-width="2" fill="none"/><text x="26" y="14" class="sh-t" transform="rotate(3 26 14)">400</text><text x="96" y="26" class="sh-t" transform="rotate(9 96 26)">1467</text><text x="173" y="44" class="sh-t">100</text><text x="180" y="50" class="sh-t" transform="rotate(-90 180 50)">280</text></svg></td>
                  <td class="n">40*d+1463+40*d</td><td>端头<b>+</b>净长<b>+</b>端头</td><td class="n">2263</td><td class="n">27</td><td class="n">0</td><td class="n">0</td><td class="n">1.396</td><td class="n">37.699</td><td>直筋</td><td>绑扎</td></tr>
                <tr class="r29 g"><th class="rowh">3</th><td>水平纵筋<b>.1</b></td><td class="lvl"><span class="gr">Φ</span></td><td class="n">1</td>
                  <td class="shape"><svg class="sh" viewBox="0 0 201 28"><path d="M23 19H173" stroke="#000" stroke-width="2"/><text x="101" y="15" class="sh-r" text-anchor="middle">3870</text></svg></td>
                  <td class="n">3870</td><td>净长</td><td class="n">3870</td><td class="n">11</td><td class="n">0</td><td class="n">0</td><td class="n">1.529</td><td class="n">16.815</td><td>直筋</td><td>绑扎</td></tr>
                <tr class="r29 g"><th class="rowh">4</th><td>水平纵筋<b>.2</b></td><td class="lvl"><span class="gr">Φ</span></td><td class="n">1</td>
                  <td class="shape"><svg class="sh" viewBox="0 0 201 28"><path d="M23 19H173" stroke="#000" stroke-width="2"/><text x="101" y="15" class="sh-r" text-anchor="middle">2695</text></svg></td>
                  <td class="n">40*d+2375</td><td>锚固长度<b>+</b>净长</td><td class="n">2695</td><td class="n">4</td><td class="n">0</td><td class="n">0</td><td class="n">1.065</td><td class="n">4.258</td><td>直筋</td><td>绑扎</td></tr>
                <tr class="r19"><th class="rowh">5</th><td></td><td class="lvl"></td><td></td><td></td><td></td><td></td><td></td><td></td><td></td><td></td><td></td><td></td><td></td><td></td></tr>
              </tbody>
            </table>
            <div class="hscroll"><i class="chev lf"></i><div class="hthumb"></div><i class="chev rt"></i></div>
          </div>
        </div>
      </div>
    </main>
  </div>

  <footer class="status">
    <span class="st s1"><b>X=32859 Y=15530</b></span>
    <span class="st s2">层高<b>:3m</b></span>
    <span class="st s3">底标高<b>:4.47m</b></span>
    <span class="st s4"><b>1(1)</b></span>
    <span class="st s5"></span>
    <div class="sogou">
      <span class="s-logo">S</span>
      <span class="s-cn">中</span>
      <span class="s-pn">°,</span>
      <svg class="s-i" viewBox="0 0 16 16"><rect x="5" y="0" width="6" height="11" rx="3" fill="#1a78c8"/><path d="M2 7q0 6 6 6t6-6M8 13v3M4 15.500h8" stroke="#1a78c8" stroke-width="1.400" fill="none"/></svg>
      <svg class="s-i" viewBox="0 0 16 16"><rect y="2" width="16" height="12" rx="2" fill="#1a78c8"/><path d="M2 5h12M2 8h12M4 11h8" stroke="#fff" stroke-dasharray="1.500 1" stroke-width="1.500"/></svg>
      <svg class="s-i" viewBox="0 0 16 16"><circle cx="7" cy="4" r="3.500" fill="#bcc8d4"/><path d="M1 15q0-8 6-8t6 8z" fill="#bcc8d4"/><rect x="8" y="10" width="8" height="6" fill="#fff" stroke="#bcc8d4"/></svg>
      <svg class="s-i" viewBox="0 0 16 16"><path d="M1 3l4-2h6l4 2-1 4-2-1v9H4V6L2 7z" fill="#1a78c8"/></svg>
      <svg class="s-i" viewBox="0 0 16 16"><path d="M1 15l7-8q-1-5 4-6l1 2-2 2 2 1 2-2 1 2q-1 4-5 3l-7 7z" fill="#1a78c8"/></svg>
    </div>
  </footer>

  <div class="taskbar">
    <div class="start"><svg class="winlogo" viewBox="0 0 16 16"><path d="M0 2.500l6.800-1v6H0zM7.700 1.300L16 0v7.500H7.700zM0 8.500h6.800v6L0 13.500zM7.700 8.500H16V16l-8.300-1.200z" fill="#fff"/></svg></div>
    <div class="search"><i class="cortana"></i><span class="ph">在这里输入你要搜索的内容</span><svg class="micsvg" viewBox="0 0 12 18"><rect x="3.500" y=".5" width="5" height="11" rx="2.500" fill="none" stroke="#999"/><path d="M1 8q0 6 5 6t5-6M6 14v3M2 17.500h8" stroke="#999" fill="none"/></svg></div>
    <div class="tasks">
      <span class="ti w50"><svg class="ti-s" viewBox="0 0 24 24"><path d="M12 11C6 10 4 8 4 5s3-4 5-3 4 4 3 9zM13 12c1-6 3-8 6-8s4 3 3 5-4 4-9 3zM12 13c6 1 8 3 8 6s-3 4-5 3-4-4-3-9zM11 12c-1 6-3 8-6 8s-4-3-3-5 4-4 9-3z" fill="#d8d8d8"/></svg></span>
      <span class="ti w50"><svg class="ti-s" viewBox="0 0 24 24"><path d="M13 5A9 9 0 1 0 20 15 6 6 0 1 1 14 8" fill="none" stroke="#ddd" stroke-width="1.500"/><path d="M12 9a5 5 0 1 0 3 5" fill="none" stroke="#ddd" stroke-width="1.500"/><path d="M19 0q3 0 3 4t2 6H15q2-2 2-6t2-4z" fill="#e8a820"/></svg></span>
      <i class="tsep"></i>
      <span class="ti w48 mlb"><svg class="ti-s" viewBox="0 0 24 24"><path d="M3 13C3 6 8 2 14 2c5 0 9 4 9 9v3H8c0 4 3 6 7 6 3 0 5-1 7-2v4c-2 1-5 2-8 2C7 24 3 19 3 13zM8 10h9c0-3-2-4-4-4-3 0-4 2-5 4z" fill="#1e7fd8"/></svg></span>
      <span class="ti w47"><svg class="ti-s" viewBox="0 0 24 24"><path d="M3 7h18v16H3z" fill="#fff"/><path d="M8 7V4q4-4 8 0v3" fill="none" stroke="#fff" stroke-width="1.500"/><path d="M9 11h2.500v2.500H9zM12.500 11H15v2.500h-2.500zM9 14.500h2.500V17H9zM12.500 14.500H15V17h-2.500z" fill="#111"/></svg></span>
      <span class="ti w48 run"><svg class="ti-s" viewBox="0 0 24 24"><path d="M2 3h9l2 3h9v15H2z" fill="#f6d66b"/><path d="M2 9h20v12H2z" fill="#fbe28d"/><path d="M8 13h8v8H8z" fill="#38a2e0"/></svg></span>
      <span class="ti w48 run"><svg class="ti-s" viewBox="0 0 24 24"><rect x="3" y="2" width="18" height="21" rx="2" fill="#f29a1e"/><path d="M6 6h10v14H6z" fill="#fff4d8"/><path d="M22 1l-9 13-2 4 4-2 9-13z" fill="#e84a1c"/></svg></span>
      <span class="ti w48 act run ml4"><svg class="ti-s" viewBox="0 0 24 24"><rect x="1" y="1" width="22" height="22" rx="4" fill="#1592ec"/><path d="M12 4v16M5 8v4q0 2 2 2h10q2 0 2-2V8" fill="none" stroke="#fff" stroke-width="2"/></svg></span>
      <span class="ti w48 run"><svg class="ti-s" viewBox="0 0 24 24"><path d="M22 2C12 1 4 6 4 14c0 6 5 9 9 9 6 0 8-5 8-8 0-2-2-5-7-4l-1 4h3c0 2-1 3-3 3-3 0-4-2-4-5 0-5 5-9 13-11z" fill="#1f9ae8"/></svg></span>
      <span class="ti w50 run"><svg class="ti-s" viewBox="0 0 24 24"><circle cx="12" cy="12" r="10.500" fill="#8ed03a"/><circle cx="12" cy="12" r="7" fill="#fff"/><path d="M5 11h14v2H5z" fill="#54a81c"/></svg></span>
    </div>
    <div class="tray">
      <div class="cpu"><span>74%</span><span>CPU使用</span></div>
      <svg class="ty up" viewBox="0 0 12 12"><path d="M1 9l5-6 5 6" fill="none" stroke="#ddd" stroke-width="1.200"/></svg>
      <svg class="ty ml10" viewBox="0 0 16 16"><path d="M5 5h10v8H5z" fill="none" stroke="#eee"/><path d="M7 7h6v4H7z" fill="#eee"/><path d="M1 2v4h3V2M2.500 6v3" stroke="#eee" fill="none"/></svg>
      <svg class="ty ml9" viewBox="0 0 16 16"><path d="M2 14a12 12 0 0 1 12-12M5 14a9 9 0 0 1 9-9M8 14a6 6 0 0 1 6-6" fill="none" stroke="#aaa" stroke-dasharray="1.500 1"/><circle cx="13" cy="13" r="1.200" fill="#eee"/></svg>
      <svg class="ty ml6" viewBox="0 0 16 16"><path d="M1 6h3l4-4v12l-4-4H1z" fill="none" stroke="#eee"/><path d="M10 5q2 3 0 6M12 3q3 5 0 10" fill="none" stroke="#eee"/></svg>
      <span class="ime">中</span>
      <span class="s-mini">S</span>
      <div class="clock"><span>17:54</span><span>2017/8/13</span></div>
      <span class="msg"><svg class="msgi" viewBox="0 0 16 16"><path d="M1 1h14v10H6l-3 3v-3H1z" fill="#eee"/><path d="M3 4h10M3 6h10M3 8h10" stroke="#111"/></svg><em class="cnt">8</em></span>
    </div>
  </div>
</div>
</body>
</html>
```

FILE: styles.css
```css
*{box-sizing:border-box;margin:0;padding:0}
html,body{width:1366px;height:768px;overflow:hidden;background:#f0f0f0}
body{font:12px/16px "Liberation Sans","Noto Sans CJK SC",sans-serif;color:#1a1a1a}
i,em,b{font-style:normal;font-weight:normal}
.sprite{position:absolute;width:0;height:0}
.app{display:flex;flex-direction:column;width:1366px;height:768px}

/* title */
.title{height:23px;background:#fff;display:flex;align-items:center;padding-left:3px;position:relative;flex:none}
.appicon{width:15px;height:15px;flex:none}
.title-text{margin-left:5px;white-space:nowrap;font-size:12.7px}
.win-btns{margin-left:auto;display:flex;gap:35px;padding-right:16px;align-items:center}
.wb{width:12px;height:12px}
.badge{position:absolute;left:105px;top:-22px;width:40px;height:40px;border-radius:50%;background:radial-gradient(circle at 50% 70%,#5ed85e,#25a53a);color:#fff;font-weight:bold;font-size:11px;display:flex;align-items:flex-end;justify-content:center;padding-bottom:3px;box-shadow:0 1px 2px 2px rgba(90,90,90,.55)}

/* menu */
.menu{height:24px;background:#f1f1f1;display:flex;align-items:center;padding:4px 0 0 7px;flex:none;position:relative;white-space:nowrap}
.mi{margin-right:10px}
.mr13{margin-right:13px}
.notice{height:23px;width:187px;margin-left:7px;background:#f8f8f8;color:#0d5c63;display:flex;align-items:center;padding-left:29px;align-self:flex-end}
.phone{font-size:12.5px}
.phone .i{width:17px;height:17px}
.more{margin-left:auto;font-size:13px;font-weight:bold;line-height:10px;padding:0 8px 8px 0;color:#222}

/* generic toolbar bits */
.i{width:15px;height:15px;flex:none;display:block}
.i.s{width:12px;height:14px}
.i.sm{width:10px;height:11px}
.t{display:inline-flex;align-items:center;gap:5px;margin-left:var(--m,8px);white-space:nowrap;height:24px;flex:none}
.t.off{color:#8e8e8e}
.t.hi{background:#dcebf8;border:1px solid #2a84cc;padding:0 2px;height:26px}
.t.hi2{background:#dcebf8;border:1px solid #2a84cc;padding:0 2px;height:24px;gap:5px;width:51px}
.t.hi2.p2{padding-left:5px;gap:2px}
.car{width:0;height:0;border:3px solid transparent;border-top:4px solid #222;border-bottom:0;flex:none;display:block}
.car.off{border-top-color:#888}
.car.push{margin-left:auto}
.sep{width:1px;height:22px;background:#bdbdbd;flex:none;display:block;margin-left:7px}
.grip{width:3px;height:20px;flex:none;display:block;background:repeating-linear-gradient(#9a9a9a 0 2px,transparent 2px 4px)}
.ml0{margin-left:0}.ml1{margin-left:1px}.ml2{margin-left:2px}.ml3{margin-left:3px}.ml4{margin-left:4px}.ml5{margin-left:5px}.ml6{margin-left:6px}.ml7{margin-left:7px}.ml8{margin-left:8px}.ml9{margin-left:9px}.ml10{margin-left:10px}.ml12{margin-left:12px}.ml13{margin-left:13px}
.g2{gap:2px}.g3{gap:3px}.g4{gap:4px}.g6{gap:6px}.g8{gap:8px}
.tbrow{display:flex;flex:none}
.grp{display:flex;align-items:center;background:linear-gradient(#fbfbfb,#f2f2f2);flex:none;white-space:nowrap}
.lbl{margin:0 0 0 4px}

/* row1 */
.row1{height:37px;padding:7px 0 4px 2px;background:#f0f0f0;gap:2px}
.g-file{width:149px;padding-left:5px}
.g-calc{width:548px;padding-left:4px}
.g-view{width:658px;margin-left:2px}
.selbox{display:flex;align-items:center;width:61px;height:26px;background:linear-gradient(90deg,#fff 49px,#f5f5f5 49px);padding-left:3px;flex:none}

/* work */
.work{display:flex;height:620px;flex:none}
.nav{width:234px;flex:none;display:flex;flex-direction:column;padding-right:4px}
.nav-head{height:16px;background:#0a55dc;color:#fff;display:flex;align-items:center;justify-content:space-between;padding:0 4px 0 0;font-size:13px;line-height:15px;flex:none}
.nav-ctl{display:flex;gap:8px}
.pin{width:9px;height:11px}
.nav-btn{background:#f4f4f4;border:1px solid #a6a6a6;border-bottom:2px solid #a6a6a6;text-align:center;display:flex;align-items:center;justify-content:center;flex:none;font-size:13px;margin-top:1px}
.h1{height:22px}.h2{height:22px}.h3{height:22px}.h4{height:22px}
.nav-tools{height:26px;margin:2px 0 0 1px;background:#f6f6f6;display:flex;align-items:center;padding-left:6px;gap:5px;flex:none}
.pm{width:18px;height:14px}
.tree{height:487px;margin:0 0 0 2px;border:1px solid #9a9a9a;display:flex;background:#fff;overflow:hidden;flex:none;width:226px}
.rows{width:207px;flex:none;overflow:hidden}
.pr,.cr{height:16px;display:flex;align-items:center;white-space:nowrap;font-size:12px;position:relative}
.cr b,.pr b{font:10px/16px "Liberation Mono",monospace}
.pr{padding-left:9px;background:repeating-linear-gradient(#888 0 1px,transparent 1px 2px) 12px 12px/1px 100% no-repeat,repeating-linear-gradient(90deg,#888 0 1px,transparent 1px 2px) 20px 8px/4px 1px no-repeat}
.cr{padding-left:43px;background:repeating-linear-gradient(#888 0 1px,transparent 1px 2px) 12px 0/1px 100% no-repeat,repeating-linear-gradient(#888 0 1px,transparent 1px 2px) 32px 0/1px 100% no-repeat,repeating-linear-gradient(90deg,#888 0 1px,transparent 1px 2px) 33px 8px/10px 1px no-repeat}
.cr.end{background:repeating-linear-gradient(#888 0 1px,transparent 1px 2px) 12px 0/1px 100% no-repeat,repeating-linear-gradient(#888 0 1px,transparent 1px 2px) 32px 0/1px 8px no-repeat,repeating-linear-gradient(90deg,#888 0 1px,transparent 1px 2px) 33px 8px/10px 1px no-repeat}
.cr .i{margin-right:5px}
.arr{width:6px;height:6px;border:solid #555;border-width:0 1.5px 1.5px 0;margin-right:7px;flex:none;display:block}
.arr.open{transform:rotate(45deg) translate(-1px,-1px)}
.arr.shut{transform:rotate(-45deg);border-color:#aaa}
.fold{width:16px;height:14px;margin:0 5px 0 1px;flex:none;display:block}
.cur{background:#d2d2d2;height:16px;display:inline-flex;align-items:center;margin-left:-3px;padding-left:3px;flex:none}
.cr .tag,.pr .tag{margin:0 0 0 1px;width:14px;height:14px}
.far{margin-left:18px}
.newtag{background:#ffe000;color:#111;font:italic bold 9px/8px "Liberation Sans",sans-serif;align-self:flex-start;padding:0 1px;margin-left:1px;flex:none}
.vscroll{width:16px;background:#f2f2f2;display:flex;flex-direction:column;align-items:center;margin-left:1px;flex:none}
.vtrack{flex:1;width:15px;display:flex;flex-direction:column}
.vthumb{margin-top:175px;height:265px;background:#c9c9c9;width:15px;flex:none}
.chev{width:7px;height:7px;border:solid #666;border-width:2px 0 0 2px;display:block;flex:none}
.chev.up{transform:rotate(45deg);margin:9px 0 3px}
.chev.dn{transform:rotate(225deg);margin:3px 0 10px}
.chev.lf{transform:rotate(-45deg);margin-left:19px}
.chev.rt{transform:rotate(135deg);margin-left:auto;margin-right:6px}

.right{width:1132px;flex:none;display:flex;flex-direction:column}
.row2{height:28px;background:#f0f0f0}
.g-edit{height:23px;margin-left:1px;width:790px;padding:1px 0 0 5px;background:linear-gradient(#f6f6f6,#f3f3f3);--m:6px}
.g-edit .t{height:22px}
.g-edit .sep{height:18px}
.row3{height:28px;background:#f0f0f0}
.g-sel{height:23px;margin-left:1px;width:566px;padding:1px 0 0 8px}
.dd{display:flex;align-items:center;justify-content:space-between;height:23px;background:#fff;padding:0 3px 0 2px;margin-right:3px;flex:none}
.w55{width:55px}.w57{width:57px}.w58{width:58px}.w69{width:69px}.w68{width:68px}.w71{width:71px}
.g-axis{height:23px;margin-left:74px;width:422px;padding:1px 0 0 3px}
.row4{height:28px;background:#f0f0f0}
.g-draw{height:25px;margin-left:1px;width:488px;padding:1px 0 0 5px}
.g-empty{height:25px;width:30px;background:#f8f8f8;margin-left:3px;display:flex;align-items:center;padding-left:3px}
.canvas{height:239px;background:#000;position:relative;flex:none;overflow:hidden}
.cad{display:block;width:1132px;height:239px}
.cadt{font:13px "Liberation Sans",sans-serif;fill:#aaa}
.cadv{font:14px "Liberation Sans",sans-serif;fill:#c8c8c8}
.ctl{position:absolute;left:10px;top:3px;width:167px;height:177px;background:#fff;border:2px solid #666;display:flex;flex-direction:column}
.ctl-h{height:29px;color:#aaa;padding:7px 0 0 6px;line-height:14px;flex:none}
.ctl-b{flex:1;border-top:1px solid #777;padding-top:2px;border-bottom:2px solid #888}
.ck{display:flex;align-items:center;height:12px;line-height:12px;padding-left:3px;color:#000;gap:3px;white-space:nowrap}
.box{width:11px;height:11px;border:1px solid #888;background:#f8f8f8;display:block;flex:none;position:relative}
.box.on::after{content:"";position:absolute;left:2px;top:0;width:4px;height:7px;border:solid #333;border-width:0 1.5px 1.5px 0;transform:rotate(40deg)}

.row5{height:33px;background:#f0f0f0;padding-top:2px;gap:3px}
.g-ortho{height:24px;width:209px;margin-left:1px;padding:1px 0 0 2px;--m:5px}
.g-snap{height:24px;width:262px;padding:1px 0 0 2px;--m:5px}
.g-off{height:24px;width:402px;margin-left:7px;padding-top:1px;background:linear-gradient(#fafafa,#f4f4f4)}
.lab{color:#777;flex:none}
.spin{width:58px;height:23px;border:1px solid #6a6a6a;background:#f6f6f6;display:flex;align-items:center;justify-content:flex-end;padding-right:20px;color:#777;margin-left:4px;position:relative;flex:none}
.spin.w68{width:68px}
.arrows{position:absolute;right:3px;top:2px;width:7px;height:17px}
.arrows::before,.arrows::after{content:"";position:absolute;left:0;border:3px solid transparent}
.arrows::before{top:1px;border-bottom:4px solid #666;border-top:0}
.arrows::after{bottom:1px;border-top:4px solid #666;border-bottom:0}
.rot{flex:none}

.rebar{display:flex;height:264px;flex:none}
.gutter{width:13px;flex:none;padding:1px 0 0 1px;background:repeating-linear-gradient(#bdbdbd 0 2px,transparent 2px 4px) 3px 15px/2px 100% no-repeat,repeating-linear-gradient(#bdbdbd 0 2px,transparent 2px 4px) 7px 15px/2px 100% no-repeat}
.closex{width:11px;height:11px;display:block}
.rebar-main{width:1119px;flex:none;display:flex;flex-direction:column}
.row6{height:28px}
.g-rebar{height:24px;width:745px;padding:1px 0 0 6px}
.gridwrap{flex:1;border:1px solid #aaa;border-width:1px 1px 2px 1px;background:#f2f2f2;overflow:hidden;margin-left:-1px;width:1118px}
.grid{border-collapse:collapse;table-layout:fixed;width:1116px}
.c1{width:34px}.c2{width:72px}.c3{width:37px}.c4{width:32px}.c5{width:201px}.c6{width:167px}.c7{width:155px}.c8{width:61px}.c9{width:39px}.c10{width:38px}.c11{width:49px}.c12{width:62px}.c13{width:61px}.c14{width:70px}.c15{width:38px}
.grid th{font-weight:normal;border:1px solid #bcbcbc;background:linear-gradient(#fff,#e9e9e9);height:19px;padding:0;overflow:hidden;white-space:nowrap;font-size:12px}
.grid th b{font:9.500px/12px "Liberation Mono",monospace}
.grid th.act{background:linear-gradient(#fbd99a,#f3be68);color:#4b0082}
.grid th.clipc{text-align:left;padding-left:12px}
.grid th.rowh{background:linear-gradient(#fff,#f0f0f0);font:12px "Liberation Mono",monospace}
.grid th.rowh b{font-size:12px}
.grid th.cur1{background:#ffd28c;color:#5a0a7a}
.grid td{border:1px solid #bcbcbc;padding:0 1px;white-space:nowrap;overflow:hidden;background:#fff;font-size:12px}
.grid tr.g td{background:#ccfed5}
.grid td b{font:10px/14px "Liberation Mono",monospace}
.grid td.n{font:10px "Liberation Mono",monospace;padding-left:2px}
.grid td:nth-child(2){border-right-color:#000}
.grid td.lvl{text-align:center}
.gr{display:inline-block;font:13px/10px "Liberation Serif",serif;border-bottom:1px solid #000;height:11px;color:#000}
.grid td.shape{padding:0}
.grid tr.g td.sel1{background:#aeeedc}
.sh{display:block;width:201px}
.sh-t{font:10px "Liberation Mono",monospace;fill:#000}
.sh-r{font:11px "Liberation Sans",sans-serif;fill:#e00000}
.r60 td,.r60 th{height:60px}
.r61 td,.r61 th{height:61px}
.r29 td,.r29 th{height:29px}
.r19 td,.r19 th{height:19px}
.hscroll{height:16px;display:flex;align-items:center;background:#f2f2f2;margin-top:1px}
.hthumb{width:718px;height:16px;background:#c9c9c9;margin-left:84px;flex:none}

/* status */
.status{height:24px;display:flex;gap:2px;padding:4px 0 0 0;background:#f0f0f0;position:relative;flex:none}
.st{height:20px;background:linear-gradient(#fff,#f6f6f6);border:1px solid #ddd;display:flex;align-items:center;padding-left:1px;font-size:12px;white-space:nowrap;flex:none}
.st b{font:10px "Liberation Mono",monospace}
.s1{width:148px}.s2{width:78px}.s3{width:98px}.s4{width:48px}.s5{width:986px}
.sogou{position:absolute;right:0;top:1px;width:184px;height:23px;background:#fbfdff;border:1px solid #c8d8e8;border-width:1px 0 0 1px;display:flex;align-items:center}
.s-logo{width:23px;height:23px;background:#f05a1e;color:#fff;font:bold 21px/22px "Liberation Sans",sans-serif;text-align:center;border-radius:4px;transform:rotate(-8deg);margin-left:-1px;margin-top:-2px;flex:none}
.s-cn{color:#1a78c8;font-size:14px;font-weight:bold;flex:none;margin-left:10px;width:14px}
.s-pn{color:#1a78c8;font-size:14px;font-weight:bold;width:12px;flex:none;margin-left:9px}
.s-i{width:15px;height:15px;flex:none;margin-left:7px}

/* taskbar */
.taskbar{height:40px;background:#06131b;display:flex;flex:none;color:#eee}
.start{width:48px;background:#000;display:flex;align-items:center;justify-content:center;flex:none}
.winlogo{width:16px;height:16px}
.search{width:344px;background:#333;display:flex;align-items:center;padding-left:11px;flex:none}
.cortana{width:20px;height:20px;border:3px solid #ddd;border-radius:50%;display:block;flex:none}
.ph{color:#8a8a8a;margin-left:5px;font-size:12.500px}
.micsvg{width:11px;height:18px;margin-left:auto;margin-right:16px}
.tasks{display:flex;flex:none;margin-left:2px;width:472px}
.ti{display:flex;align-items:center;justify-content:center;height:40px;flex:none;position:relative}
.w50{width:50px}.w48{width:48px}.w47{width:47px}
.ti-s{width:24px;height:24px}
.tsep{width:1px;height:14px;background:#555;align-self:center;margin-left:9px;display:block;flex:none}
.mlb{margin-left:15px}
.ti.run::after{content:"";position:absolute;left:4px;right:4px;bottom:0;height:2px;background:#5aa7e6}
.ti.act{background:#2b3338}
.ti.act::after{left:0;right:0}
.tray{display:flex;align-items:center;flex:1}
.cpu{display:flex;flex-direction:column;align-items:center;width:66px;line-height:17px;font-size:12.500px;margin-left:149px;padding-top:3px;flex:none}
.ty{width:16px;height:16px;flex:none}
.ty.up{width:12px;height:12px;margin-left:11px}
.ime{margin-left:10px;font-size:13px;flex:none}
.s-mini{background:#f05a1e;color:#fff;width:15px;height:16px;border-radius:3px;font:bold 14px/16px "Liberation Sans",sans-serif;text-align:center;margin-left:15px;flex:none}
.clock{display:flex;flex-direction:column;align-items:center;margin-left:25px;line-height:18px;padding-top:2px;width:70px;flex:none;white-space:nowrap}
.msg{position:relative;width:22px;height:24px;display:block;flex:none}
.msgi{width:16px;height:16px;display:block}
.cnt{position:absolute;left:6px;top:7px;width:14px;height:14px;border-radius:50%;background:#333;border:1px solid #aaa;color:#fff;font:bold 10px/12px "Liberation Sans",sans-serif;text-align:center}
```
